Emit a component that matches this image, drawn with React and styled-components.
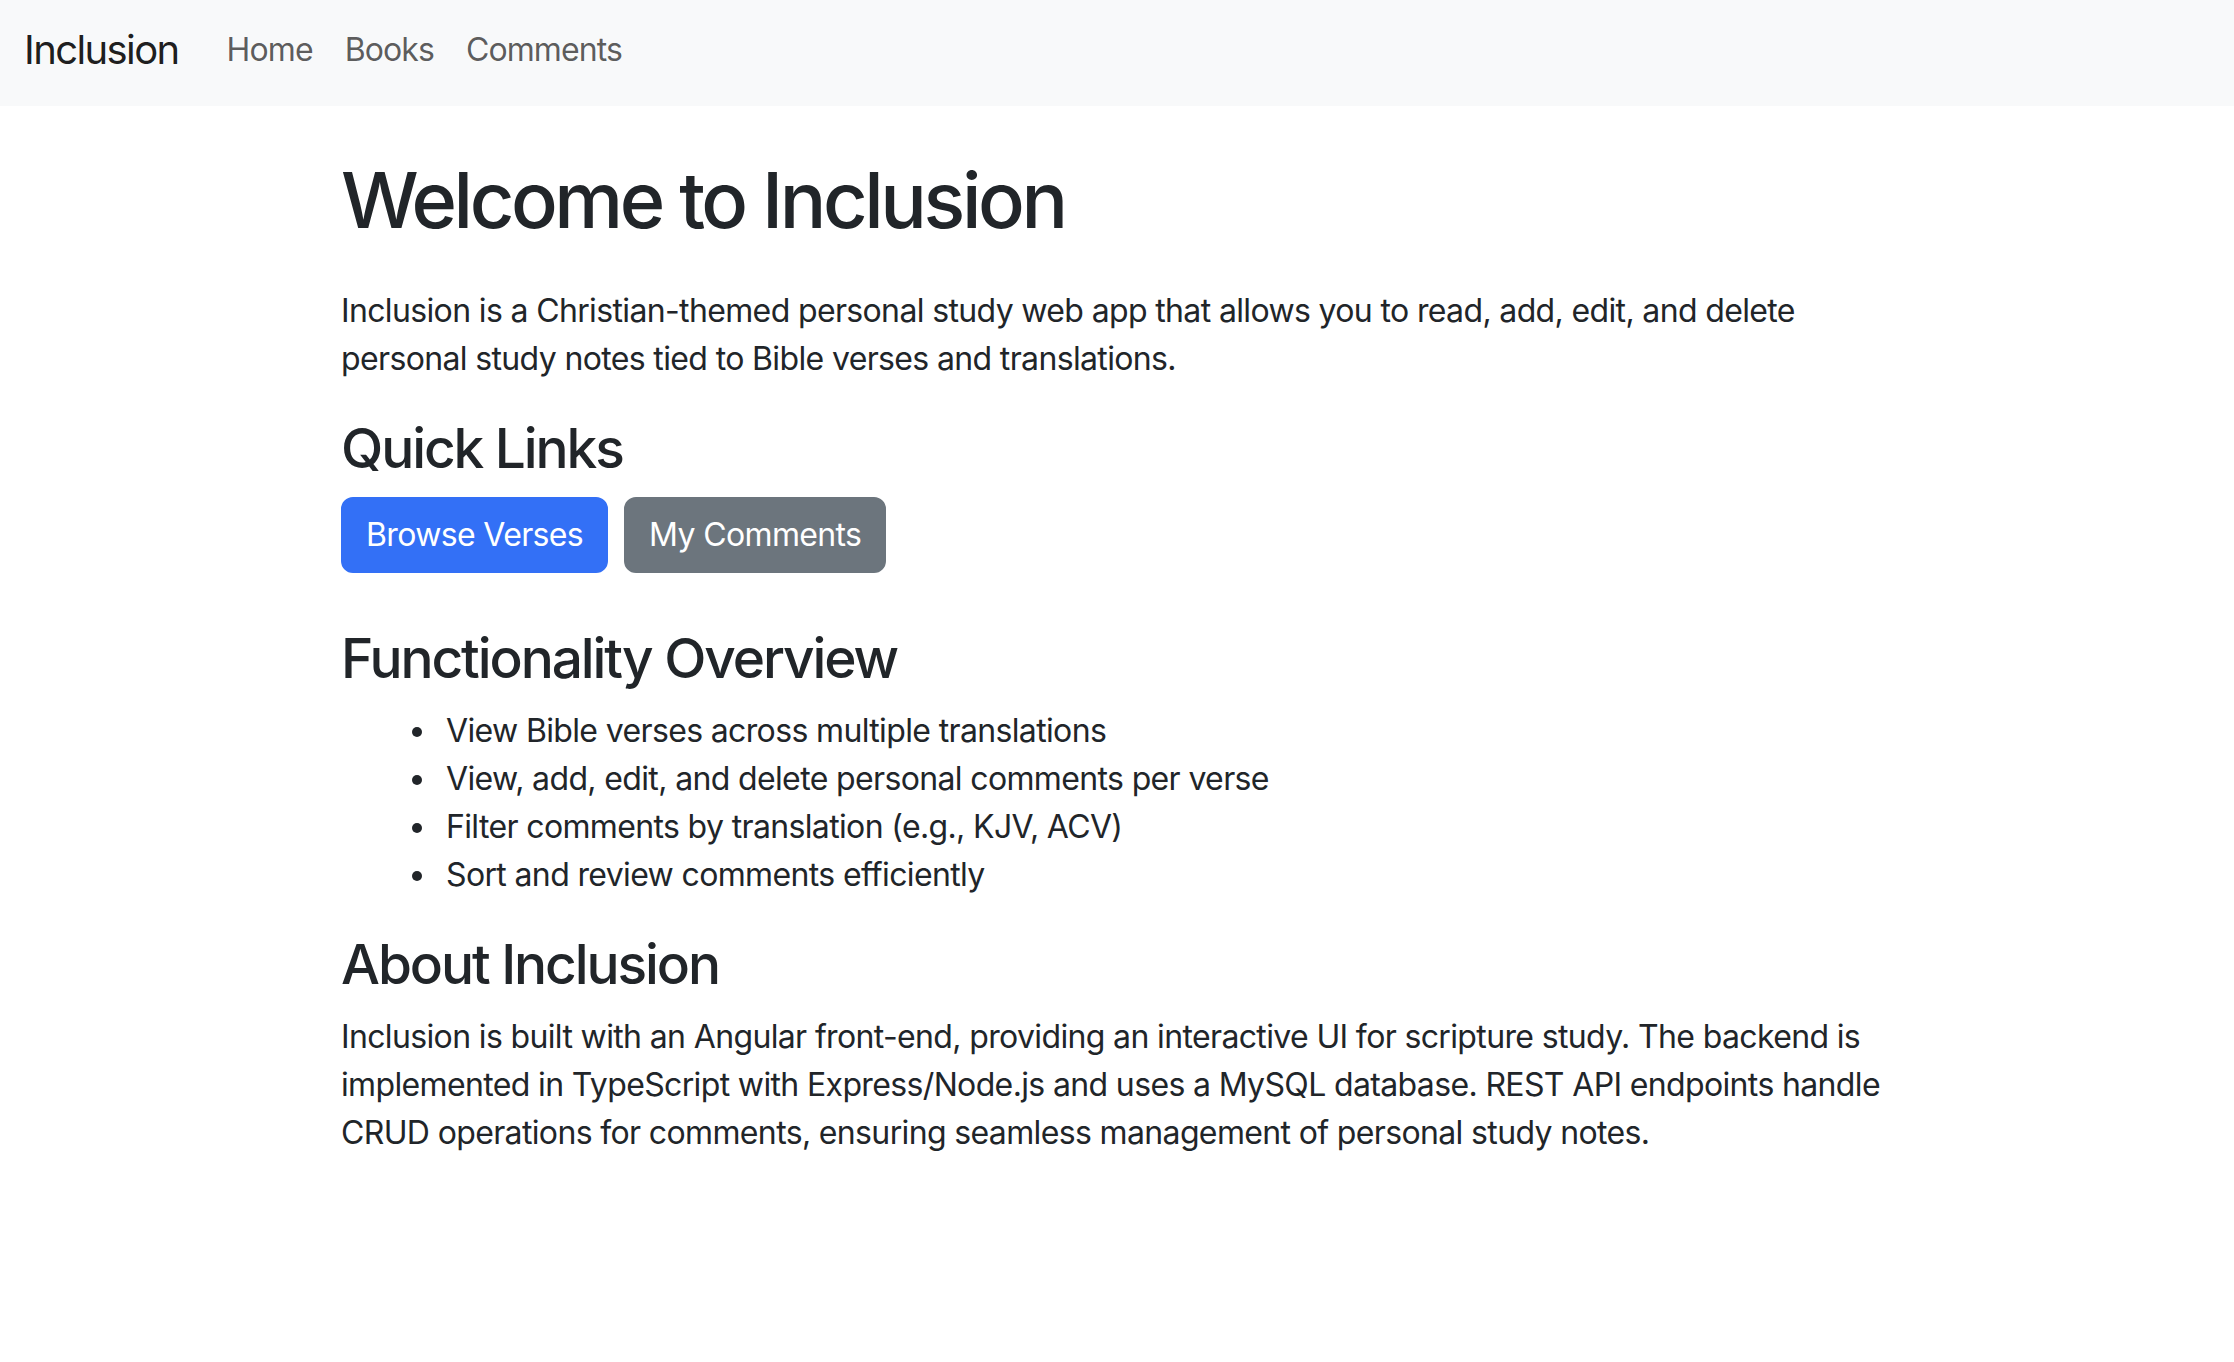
import React from "react";
import styled, { createGlobalStyle } from "styled-components";

const GlobalStyle = createGlobalStyle`
  * { box-sizing: border-box; }
  body {
    margin: 0;
    background: #fff;
    color: #212529;
    font-family: Inter, "Noto Sans", "Liberation Sans", sans-serif;
    font-size: 32px;
    line-height: 1.5;
    letter-spacing: -0.02em;
  }
`;

const links = ["Home", "Books", "Comments"];

const features = [
  "View Bible verses across multiple translations",
  "View, add, edit, and delete personal comments per verse",
  "Filter comments by translation (e.g., KJV, ACV)",
  "Sort and review comments efficiently",
];

const App = () => {
  return (
    <>
      <GlobalStyle />
      <Navbar>
        <Brand href="#">Inclusion</Brand>
        <NavList>
          {links.map((l) => (
            <NavLink key={l} href="#">{l}</NavLink>
          ))}
        </NavList>
      </Navbar>

      <Container>
        <Title>Welcome to Inclusion</Title>
        <Lead>
          Inclusion is a Christian-themed personal study web app that allows you to read, add, edit, and delete
          personal study notes tied to Bible verses and translations.
        </Lead>

        <Heading>Quick Links</Heading>
        <ButtonRow>
          <Button href="#" $variant="primary">Browse Verses</Button>
          <Button href="#" $variant="secondary">My Comments</Button>
        </ButtonRow>

        <Heading>Functionality Overview</Heading>
        <FeatureList>
          {features.map((f) => (
            <Feature key={f}>{f}</Feature>
          ))}
        </FeatureList>

        <Heading>About Inclusion</Heading>
        <Text>
          Inclusion is built with an Angular front-end, providing an interactive UI for scripture study. The backend is
          implemented in TypeScript with Express/Node.js and uses a MySQL database. REST API endpoints handle
          CRUD operations for comments, ensuring seamless management of personal study notes.
        </Text>
      </Container>
    </>
  );
};

const Navbar = styled.nav`
  display: flex;
  align-items: center;
  height: 106px;
  padding: 0 24px 6px;
  background-color: #f8f9fa;
`;

const Brand = styled.a`
  margin-right: 32px;
  font-size: 40px;
  line-height: 60px;
  letter-spacing: -0.04em;
  color: rgba(0, 0, 0, 0.9);
  text-decoration: none;
`;

const NavList = styled.div`
  display: flex;
`;

const NavLink = styled.a`
  padding: 0 16px;
  font-size: 32px;
  letter-spacing: -0.028em;
  color: rgba(0, 0, 0, 0.65);
  text-decoration: none;
`;

const Container = styled.main`
  max-width: 1600px;
  margin: 48px auto 0;
  padding: 0 24px;
`;

const Title = styled.h1`
  margin: 0 0 40px;
  font-size: 77.5px;
  font-weight: 500;
  line-height: 1.2;
  letter-spacing: -0.044em;
`;

const Lead = styled.p`
  margin: 0 0 32px;
`;

const Text = styled.p`
  margin: 0 0 32px;
`;

const Heading = styled.h3`
  margin: 0 0 16px;
  font-size: 55px;
  font-weight: 500;
  line-height: 1.2;
  letter-spacing: -0.038em;
`;

const ButtonRow = styled.div`
  display: flex;
  gap: 16px;
  margin-bottom: 52px;
`;

const Button = styled.a`
  display: inline-block;
  padding: 12px 23px;
  border: 2px solid transparent;
  border-radius: 12px;
  font-size: 32px;
  line-height: 48px;
  color: #fff;
  text-decoration: none;
  background-color: ${(p) => (p.$variant === "primary" ? "#3370f6" : "#6c757d")};
  border-color: ${(p) => (p.$variant === "primary" ? "#3370f6" : "#6c757d")};
`;

const FeatureList = styled.ul`
  margin: 0 0 32px;
  padding-left: 98px;
  list-style: disc;
`;

const Feature = styled.li`
  padding-left: 7px;
`;

export default App;
